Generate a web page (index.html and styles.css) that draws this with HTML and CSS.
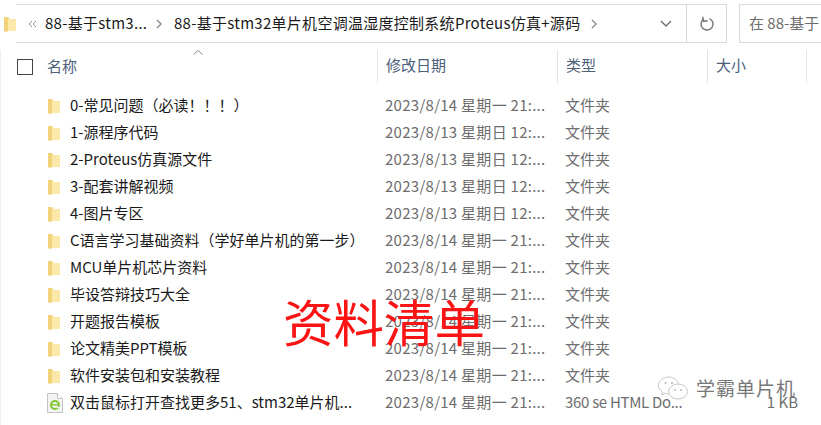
FILE: index.html
```html
<!DOCTYPE html>
<html lang="zh">
<head>
<meta charset="utf-8">
<title>资料清单</title>
<link rel="stylesheet" href="styles.css">
</head>
<body>
<div class="window">
  <div class="toolbar">
    <svg class="folder-top" width="12" height="16" viewBox="0 0 12 16"><path d="M0 1h4l1 1v13l-3 1-2-1z" fill="#f2d27a"/><path d="M4 3h8v12H4z" fill="#fce8a8"/></svg>
    <div class="address">
      <svg class="chev-double" width="9" height="8" viewBox="0 0 9 8"><path d="M4 1 1 4l3 3M8 1 5 4l3 3" fill="none" stroke="#9a9a9a"/></svg>
      <span class="crumb crumb-short">88-基于stm3...</span>
      <svg class="chev" width="7" height="10" viewBox="0 0 7 10"><path d="M1 1l4 4-4 4" fill="none" stroke="#8a8a8a" stroke-width="1.4"/></svg>
      <span class="crumb crumb-long">88-基于stm32单片机空调温湿度控制系统Proteus仿真+源码</span>
      <svg class="chev" width="7" height="10" viewBox="0 0 7 10"><path d="M1 1l4 4-4 4" fill="none" stroke="#8a8a8a" stroke-width="1.4"/></svg>
      <svg class="dropdown" width="12" height="7" viewBox="0 0 12 7"><path d="M1 1l5 5 5-5" fill="none" stroke="#6d6d6d" stroke-width="1.4"/></svg>
      <div class="refresh">
        <svg width="16" height="16" viewBox="0 0 16 16"><path d="M10.500 2.600A6 6 0 1 1 5 2.900" fill="none" stroke="#7a7a7a" stroke-width="1.500"/><path d="M4 .6v4.600h4.400" fill="none" stroke="#7a7a7a" stroke-width="1.500" transform="rotate(-8 5 3)"/></svg>
      </div>
    </div>
    <div class="search">在 88-基于</div>
  </div>
  <div class="list">
    <div class="row head">
      <div class="cell name-head"><span class="check"></span><span>名称</span><svg class="sort" width="10" height="5" viewBox="0 0 10 5"><path d="M.5 4.500 5 .5l4.500 4" fill="none" stroke="#8a8a8a"/></svg></div>
      <div class="cell sep">修改日期</div>
      <div class="cell sep">类型</div>
      <div class="cell sep last">大小</div>
    </div>
    <div class="rows">
      <div class="row item"><div class="cell name"><svg class="ico" width="12" height="16" viewBox="0 0 12 16"><path d="M0 1h4l1 1v13l-3 1-2-1z" fill="#f2d27a"/><path d="M4 3h8v12H4z" fill="#fce8a8"/></svg><span>0-常见问题（必读！！！）</span></div><div class="cell date">2023/8/14 星期一 21:...</div><div class="cell">文件夹</div><div class="cell"></div></div>
      <div class="row item"><div class="cell name"><svg class="ico" width="12" height="16" viewBox="0 0 12 16"><path d="M0 1h4l1 1v13l-3 1-2-1z" fill="#f2d27a"/><path d="M4 3h8v12H4z" fill="#fce8a8"/></svg><span>1-源程序代码</span></div><div class="cell date">2023/8/13 星期日 12:...</div><div class="cell">文件夹</div><div class="cell"></div></div>
      <div class="row item"><div class="cell name"><svg class="ico" width="12" height="16" viewBox="0 0 12 16"><path d="M0 1h4l1 1v13l-3 1-2-1z" fill="#f2d27a"/><path d="M4 3h8v12H4z" fill="#fce8a8"/></svg><span>2-Proteus仿真源文件</span></div><div class="cell date">2023/8/13 星期日 12:...</div><div class="cell">文件夹</div><div class="cell"></div></div>
      <div class="row item"><div class="cell name"><svg class="ico" width="12" height="16" viewBox="0 0 12 16"><path d="M0 1h4l1 1v13l-3 1-2-1z" fill="#f2d27a"/><path d="M4 3h8v12H4z" fill="#fce8a8"/></svg><span>3-配套讲解视频</span></div><div class="cell date">2023/8/13 星期日 12:...</div><div class="cell">文件夹</div><div class="cell"></div></div>
      <div class="row item"><div class="cell name"><svg class="ico" width="12" height="16" viewBox="0 0 12 16"><path d="M0 1h4l1 1v13l-3 1-2-1z" fill="#f2d27a"/><path d="M4 3h8v12H4z" fill="#fce8a8"/></svg><span>4-图片专区</span></div><div class="cell date">2023/8/13 星期日 12:...</div><div class="cell">文件夹</div><div class="cell"></div></div>
      <div class="row item"><div class="cell name"><svg class="ico" width="12" height="16" viewBox="0 0 12 16"><path d="M0 1h4l1 1v13l-3 1-2-1z" fill="#f2d27a"/><path d="M4 3h8v12H4z" fill="#fce8a8"/></svg><span>C语言学习基础资料（学好单片机的第一步）</span></div><div class="cell date">2023/8/14 星期一 21:...</div><div class="cell">文件夹</div><div class="cell"></div></div>
      <div class="row item"><div class="cell name"><svg class="ico" width="12" height="16" viewBox="0 0 12 16"><path d="M0 1h4l1 1v13l-3 1-2-1z" fill="#f2d27a"/><path d="M4 3h8v12H4z" fill="#fce8a8"/></svg><span>MCU单片机芯片资料</span></div><div class="cell date">2023/8/14 星期一 21:...</div><div class="cell">文件夹</div><div class="cell"></div></div>
      <div class="row item"><div class="cell name"><svg class="ico" width="12" height="16" viewBox="0 0 12 16"><path d="M0 1h4l1 1v13l-3 1-2-1z" fill="#f2d27a"/><path d="M4 3h8v12H4z" fill="#fce8a8"/></svg><span>毕设答辩技巧大全</span></div><div class="cell date">2023/8/14 星期一 21:...</div><div class="cell">文件夹</div><div class="cell"></div></div>
      <div class="row item"><div class="cell name"><svg class="ico" width="12" height="16" viewBox="0 0 12 16"><path d="M0 1h4l1 1v13l-3 1-2-1z" fill="#f2d27a"/><path d="M4 3h8v12H4z" fill="#fce8a8"/></svg><span>开题报告模板</span></div><div class="cell date">2023/8/14 星期一 21:...</div><div class="cell">文件夹</div><div class="cell"></div></div>
      <div class="row item"><div class="cell name"><svg class="ico" width="12" height="16" viewBox="0 0 12 16"><path d="M0 1h4l1 1v13l-3 1-2-1z" fill="#f2d27a"/><path d="M4 3h8v12H4z" fill="#fce8a8"/></svg><span>论文精美PPT模板</span></div><div class="cell date">2023/8/14 星期一 21:...</div><div class="cell">文件夹</div><div class="cell"></div></div>
      <div class="row item"><div class="cell name"><svg class="ico" width="12" height="16" viewBox="0 0 12 16"><path d="M0 1h4l1 1v13l-3 1-2-1z" fill="#f2d27a"/><path d="M4 3h8v12H4z" fill="#fce8a8"/></svg><span>软件安装包和安装教程</span></div><div class="cell date">2023/8/14 星期一 21:...</div><div class="cell">文件夹</div><div class="cell"></div></div>
      <div class="row item"><div class="cell name"><svg class="ico ico-file" width="16" height="20" viewBox="0 0 16 20"><path d="M.5.5h10l5 5v14H.5z" fill="#f3f3f3" stroke="#c4c4c4"/><path d="M10.500.5v5h5" fill="#fff" stroke="#c4c4c4"/><circle cx="8" cy="12" r="4" fill="none" stroke="#7ec832" stroke-width="2"/><path d="M4.500 11.800h7" stroke="#7ec832" stroke-width="1.400"/><path d="M10 14.500h3" stroke="#f3f3f3" stroke-width="1.500"/></svg><span>双击鼠标打开查找更多51、stm32单片机...</span></div><div class="cell date">2023/8/14 星期一 21:...</div><div class="cell type-long">360 se HTML Do...</div><div class="cell size">1 KB</div></div>
    </div>
  </div>
  <div class="stamp">资料清单</div>
  <div class="watermark">
    <svg width="32" height="24" viewBox="0 0 32 24"><path d="M12 1C6 1 1.500 4.800 1.500 9.500c0 2.700 1.500 5 3.900 6.600L4.500 19l3.300-1.700c1.300.4 2.700.6 4.200.6" fill="none" stroke="#c6c6c6"/><path d="M22 9.500C21 4.700 17 1 12 1" fill="none" stroke="#c6c6c6"/><ellipse cx="21" cy="15.500" rx="9.500" ry="7.500" fill="#fff" stroke="#c6c6c6"/><circle cx="8.500" cy="7" r="1" fill="#b5b5b5"/><circle cx="15" cy="7" r="1" fill="#b5b5b5"/><circle cx="18" cy="14" r=".9" fill="#b5b5b5"/><circle cx="24" cy="14" r=".9" fill="#b5b5b5"/></svg>
    <span>学霸单片机</span>
  </div>
</div>
</body>
</html>
```

FILE: styles.css
```css
* { box-sizing: border-box; }
html, body { margin: 0; padding: 0; background: #fff; }
body { font-family: "Noto Sans CJK SC", "Noto Sans", sans-serif; }
.window { position: relative; width: 821px; height: 425px; overflow: hidden; background: #fff; }

.toolbar { display: flex; align-items: center; height: 39px; margin-top: 4px; position: absolute; top: 0; left: 0; right: 0; }
.folder-top { flex: none; margin-left: 4px; }
.address { display: flex; align-items: center; width: 711px; height: 39px; border: 1px solid #d9d9d9; border-left: 0; font-size: 15px; line-height: 36px; color: #1a1a1a; white-space: nowrap; }
.chev-double { margin-left: 12px; }
.crumb { letter-spacing: 0.28px; position: relative; top: -1px; }
.crumb-short { margin-left: 8px; width: 111px; }
.crumb-long { margin-left: 11px; }
.chev { flex: none; }
.crumb-long + .chev { margin-left: 11px; }
.dropdown { margin-left: auto; margin-right: 14px; }
.refresh { display: flex; align-items: center; justify-content: center; width: 40px; height: 37px; border-left: 1px solid #d9d9d9; }
.search { margin-left: 12px; flex: 1; height: 39px; border: 1px solid #d9d9d9; border-right: 0; padding-left: 9px; font-size: 15px; line-height: 35px; color: #6d6d6d; white-space: nowrap; }

.list { position: absolute; top: 50px; left: 0; right: 0; bottom: 0; border-left: 1px solid #eeeeee; }
.row { display: grid; grid-template-columns: 376px 180px 150px 100px; align-items: center; font-size: 15px; }
.cell { padding-left: 8px; white-space: nowrap; color: #6d6d6d; }
.date { letter-spacing: 0.27px; }
.type-long { letter-spacing: -0.3px; }
.head { height: 33px; }
.head .cell { height: 33px; line-height: 30px; color: #4c607a; }
.name-head { position: relative; display: flex; align-items: center; gap: 14px; padding-left: 16px !important; }
.name-head span:nth-child(2) { position: relative; top: -1px; }
.sep { border-left: 1px solid #e4e4e4; }
.last { border-right: 1px solid #e4e4e4; }
.check { width: 16px; height: 16px; border: 1px solid #444; display: block; }
.sort { position: absolute; left: 192px; top: 0; }
.rows { padding-top: 9px; }
.item { height: 27px; }
.name { display: flex; align-items: center; padding-left: 47px; color: #1a1a1a; }
.name span { margin-left: 10px; position: relative; top: -1px; }
.item .cell { line-height: 25px; height: 27px; }
.ico { flex: none; }
.ico-file { margin-left: -1px; margin-right: -3px; }
.size { text-align: right; padding-right: 9px; }

.stamp { position: absolute; left: 283px; top: 285px; font-size: 50.500px; line-height: 70px; color: #fb1414; white-space: nowrap; }
.watermark { position: absolute; left: 657px; top: 376px; display: flex; align-items: center; gap: 7px; font-size: 19px; line-height: 24px; color: #777; letter-spacing: 1px; }
```
